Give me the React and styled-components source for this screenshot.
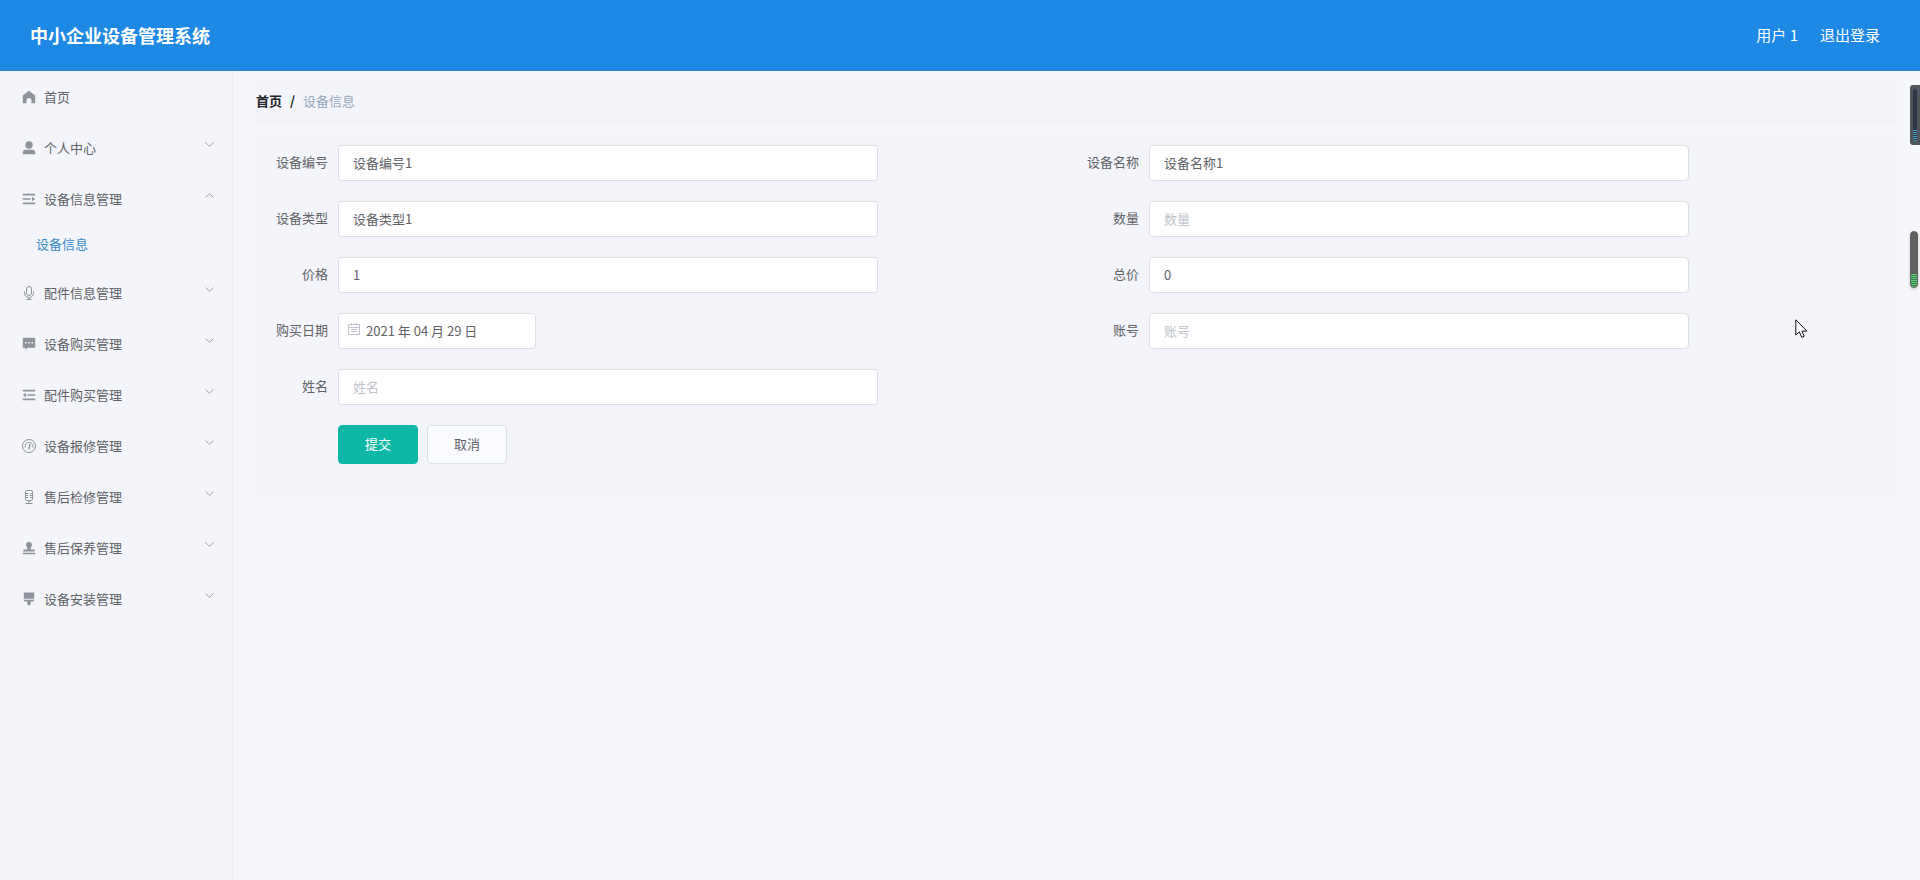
import React from "react";
import styled, { createGlobalStyle } from "styled-components";

const GlobalStyle = createGlobalStyle`
  * {
    box-sizing: border-box;
  }
  body {
    margin: 0;
    background: #f5f7fb;
    color: #606266;
    font-family: "Noto Sans CJK SC", "Noto Sans", sans-serif;
    font-size: 13px;
    line-height: 20px;
  }
  button, input {
    font-family: inherit;
    font-size: inherit;
  }
  a {
    color: inherit;
    text-decoration: none;
  }
`;

const icons = {
  home: <path d="M7 0.8 L13.2 5.6 V13.2 H9.4 V9.6 Q9.4 8 7 8 Q4.6 8 4.6 9.6 V13.2 H0.8 V5.6 Z" />,
  user: (
    <>
      <circle cx="7" cy="4" r="3.7" />
      <path d="M3.5 8.7 H10.5 Q13.2 8.7 13.2 11.5 V13.2 H0.8 V11.5 Q0.8 8.7 3.5 8.7 Z" />
    </>
  ),
  unfold: (
    <path d="M0.8 1.8 H13.2 V3.4 H0.8 Z M0.8 6.2 H8.6 V7.8 H0.8 Z M0.8 10.6 H13.2 V12.2 H0.8 Z M10 4.8 L13.2 7 L10 9.2 Z" />
  ),
  microphone: (
    <g fill="none" stroke="currentColor">
      <rect x="4.5" y="0.5" width="5" height="9" rx="2.5" />
      <path d="M2.5 5.5 V7.5 A4.5 4 0 0 0 11.5 7.5 V5.5 M7 11.5 V13.5 M4.5 13.5 H9.5" />
    </g>
  ),
  comment: (
    <>
      <path d="M1.4 0.8 H12.6 Q13.2 0.8 13.2 1.4 V10.8 H5.8 L3.4 13 V10.8 H0.8 V1.4 Q0.8 0.8 1.4 0.8 Z" />
      <path d="M3 5 H4.5 V6.5 H3 Z M6.25 5 H7.75 V6.5 H6.25 Z M9.5 5 H11 V6.5 H9.5 Z" fill="#f3f5fa" />
    </>
  ),
  fold: (
    <path d="M0.8 1.8 H13.2 V3.4 H0.8 Z M5.4 6.2 H13.2 V7.8 H5.4 Z M0.8 10.6 H13.2 V12.2 H0.8 Z M4 4.8 L0.8 7 L4 9.2 Z" />
  ),
  odometer: (
    <g fill="none" stroke="currentColor">
      <circle cx="7" cy="7" r="6.5" />
      <path d="M3.2 8.6 A4 4 0 1 1 10.8 8.6" strokeWidth="0.9" />
      <path d="M6.8 10.4 L8 5.2" strokeWidth="1.5" />
    </g>
  ),
  mic: (
    <g fill="none" stroke="currentColor">
      <rect x="3.5" y="0.5" width="7" height="10" rx="1.5" />
      <path d="M4 3.5 H6.2 M4 5.5 H6.2 M4 7.5 H6.2 M10 3.5 H7.8 M10 5.5 H7.8 M10 7.5 H7.8 M7 10.5 V13.5 M3.5 13.5 H10.5" />
    </g>
  ),
  stamp: (
    <path d="M7 0.8 A3 3 0 0 1 9.4 5.6 Q8.6 6.8 8.8 8.4 H12 Q12.8 8.4 12.8 9.2 V10.6 H1.2 V9.2 Q1.2 8.4 2 8.4 H5.2 Q5.4 6.8 4.6 5.6 A3 3 0 0 1 7 0.8 Z M0.8 11.8 H13.2 V13.2 H0.8 Z" />
  ),
  brush: (
    <path d="M1.8 0.6 H12.2 V6.8 H1.8 Z M1.8 7.8 H12.2 Q12.2 9.4 10.8 9.4 H8.6 V12 Q8.6 13.4 7 13.4 Q5.4 13.4 5.4 12 V9.4 H3.2 Q1.8 9.4 1.8 7.8 Z" />
  ),
};

const menus = [
  { icon: "user", name: "个人中心" },
  { icon: "unfold", name: "设备信息管理", children: ["设备信息"] },
  { icon: "microphone", name: "配件信息管理" },
  { icon: "comment", name: "设备购买管理" },
  { icon: "fold", name: "配件购买管理" },
  { icon: "odometer", name: "设备报修管理" },
  { icon: "mic", name: "售后检修管理" },
  { icon: "stamp", name: "售后保养管理" },
  { icon: "brush", name: "设备安装管理" },
];

const fields = [
  { id: "code", label: "设备编号", value: "设备编号1" },
  { id: "name", label: "设备名称", value: "设备名称1" },
  { id: "type", label: "设备类型", value: "设备类型1" },
  { id: "count", label: "数量", value: "" },
  { id: "price", label: "价格", value: "1" },
  { id: "total", label: "总价", value: "0" },
  { id: "date", label: "购买日期", value: "2021 年 04 月 29 日", date: true },
  { id: "account", label: "账号", value: "" },
  { id: "username", label: "姓名", value: "" },
];

const MenuIcon = ({ name }) => (
  <svg width="14" height="14" viewBox="0 0 14 14" fill="currentColor" aria-hidden="true">
    {icons[name]}
  </svg>
);

const Arrow = ({ open }) => (
  <ArrowIcon width="9" height="5" viewBox="0 0 9 5" aria-hidden="true">
    <path d={open ? "M0.5 4.5 L4.5 0.7 L8.5 4.5" : "M0.5 0.5 L4.5 4.3 L8.5 0.5"} />
  </ArrowIcon>
);

const Sidebar = () => (
  <Aside>
    <MenuList>
      <li>
        <MenuLink href="#home">
          <MenuIcon name="home" />
          首页
        </MenuLink>
      </li>
      {menus.map((menu) => (
        <li key={menu.name}>
          <MenuButton type="button" aria-expanded={!!menu.children}>
            <MenuIcon name={menu.icon} />
            {menu.name}
            <Arrow open={!!menu.children} />
          </MenuButton>
          {menu.children &&
            menu.children.map((child) => (
              <SubLink href="#device" key={child}>
                {child}
              </SubLink>
            ))}
        </li>
      ))}
    </MenuList>
  </Aside>
);

const Field = ({ field }) => (
  <FormItem>
    <Label htmlFor={field.id}>{field.label}</Label>
    {field.date ? (
      <DateBox>
        <svg width="12" height="12" viewBox="0 0 12 12" fill="none" stroke="currentColor" aria-hidden="true">
          <path d="M0.5 1.5 H11.5 V11.5 H0.5 Z M0.5 4.5 H11.5 M3.5 0 V2.5 M8.5 0 V2.5 M3 6.5 H9 M3 8.5 H9" />
        </svg>
        <DateInput id={field.id} defaultValue={field.value} />
      </DateBox>
    ) : (
      <Input id={field.id} defaultValue={field.value} placeholder={field.label} />
    )}
  </FormItem>
);

const App = () => {
  return (
    <>
      <GlobalStyle />
      <Page>
        <Header>
          <Title>中小企业设备管理系统</Title>
          <UserBox>
            <span>用户 1</span>
            <a href="#logout">退出登录</a>
          </UserBox>
        </Header>
        <Body>
          <Sidebar />
          <Main>
            <Breadcrumb>
              <a href="#home">首页</a>
              <b>/</b>
              <span>设备信息</span>
            </Breadcrumb>
            <Form onSubmit={(e) => e.preventDefault()}>
              {fields.map((field) => (
                <Field field={field} key={field.id} />
              ))}
              <Actions>
                <Button type="submit" $primary>
                  提交
                </Button>
                <Button type="button">取消</Button>
              </Actions>
            </Form>
          </Main>
        </Body>
      </Page>

      {/* floating meters at the window edge */}
      <Meter>
        <i />
      </Meter>
      <Gauge />
      <Cursor width="13" height="20" viewBox="0 0 13 20" aria-hidden="true">
        <path d="M0.8 0.8 V16 L4.3 12.8 L6.8 18.4 L9.2 17.3 L6.9 12.1 H11.8 Z" />
      </Cursor>
    </>
  );
};

const Page = styled.div`
  display: flex;
  flex-direction: column;
  min-height: 100vh;
`;

const Header = styled.header`
  display: flex;
  align-items: center;
  justify-content: space-between;
  height: 71px;
  padding: 0 40px 0 30px;
  background: #1e88e5;
  border-bottom: 1px solid #2c80cb;
  color: #fff;
`;

const Title = styled.h1`
  margin: 0;
  font-size: 18px;
  font-weight: 700;
`;

const UserBox = styled.div`
  display: flex;
  gap: 22px;
  font-size: 15px;
`;

const Body = styled.div`
  display: flex;
  flex: 1;
`;

const Aside = styled.aside`
  width: 233px;
  flex-shrink: 0;
  background: #f3f5fa;
  border-right: 1px solid #eceef4;
`;

const MenuList = styled.ul`
  margin: 0;
  padding: 0;
  list-style: none;
`;

const MenuLink = styled.a`
  display: flex;
  align-items: center;
  gap: 8px;
  width: 100%;
  height: 51px;
  padding: 0 18px 0 22px;
  color: #606266;
  > svg:first-child {
    color: #909399;
  }
`;

const MenuButton = styled(MenuLink).attrs({ as: "button" })`
  border: 0;
  background: none;
  cursor: pointer;
`;

const ArrowIcon = styled.svg`
  margin: 0 0 6px auto;
  fill: none;
  stroke: #a0a3aa;
`;

const SubLink = styled.a`
  display: block;
  padding: 0 36px 4px;
  color: #3a8ac6;
  line-height: 39px;
`;

const Main = styled.main`
  flex: 1;
  padding: 8px 22px 8px 23px;
`;

const Breadcrumb = styled.nav`
  display: flex;
  align-items: center;
  gap: 8px;
  height: 46px;
  padding-bottom: 2px;
  margin-bottom: 9px;
  background: #f3f5fa;
  color: #97a8be;
  a, b {
    color: #222428;
    font-weight: 700;
  }
`;

const Form = styled.form`
  display: grid;
  grid-template-columns: 1fr 1fr;
  row-gap: 20px;
  padding: 11px 10px 30px;
  background: #f3f5fa;
`;

const FormItem = styled.div`
  display: flex;
  align-items: center;
  height: 36px;
`;

const Label = styled.label`
  width: 72px;
  padding: 0 10px 2px 0;
  text-align: right;
  flex-shrink: 0;
`;

const Input = styled.input`
  width: 540px;
  height: 36px;
  padding: 0 14px 2px;
  border: 1px solid #dcdfe6;
  border-radius: 4px;
  background: #fff;
  color: #606266;
  outline: none;
  &::placeholder {
    color: #c0c4cc;
  }
`;

const DateBox = styled.div`
  position: relative;
  svg {
    position: absolute;
    top: 10px;
    left: 10px;
    color: #c0c4cc;
  }
`;

const DateInput = styled(Input)`
  width: 198px;
  padding-left: 27px;
`;

const Actions = styled.div`
  display: flex;
  grid-column: 1 / -1;
  gap: 9px;
  padding-left: 72px;
`;

const Button = styled.button`
  width: 80px;
  height: 39px;
  padding-bottom: 3px;
  border: 1px solid ${({ $primary }) => ($primary ? "#0fb8a6" : "#dcdfe6")};
  border-radius: 4px;
  background: ${({ $primary }) => ($primary ? "#0fb8a6" : "#fafbff")};
  color: ${({ $primary }) => ($primary ? "#fff" : "#606266")};
  cursor: pointer;
`;

const Meter = styled.div`
  position: fixed;
  top: 85px;
  right: 0;
  width: 10px;
  height: 60px;
  padding: 4px 3px;
  border-radius: 3px 0 0 3px;
  background: #50565c;
  i {
    display: block;
    width: 4px;
    height: 52px;
    border-radius: 2px;
    background: repeating-linear-gradient(#4a9fc4 0 1px, #2e3645 1px 2px) bottom / 100% 11px no-repeat #2e3645;
  }
`;

const Gauge = styled.div`
  position: fixed;
  top: 231px;
  right: 2px;
  width: 8px;
  height: 57px;
  border: 1px solid #606260;
  border-radius: 4px;
  background: repeating-linear-gradient(#5fcf7c 0 1px, #3c7d4c 1px 2px) bottom / 100% 13px no-repeat #606260;
  box-shadow: 0 1px 3px rgba(0, 0, 0, 0.2);
`;

const Cursor = styled.svg`
  position: fixed;
  top: 319px;
  right: 112px;
  fill: #fff;
  stroke: #111;
`;

export default App;
